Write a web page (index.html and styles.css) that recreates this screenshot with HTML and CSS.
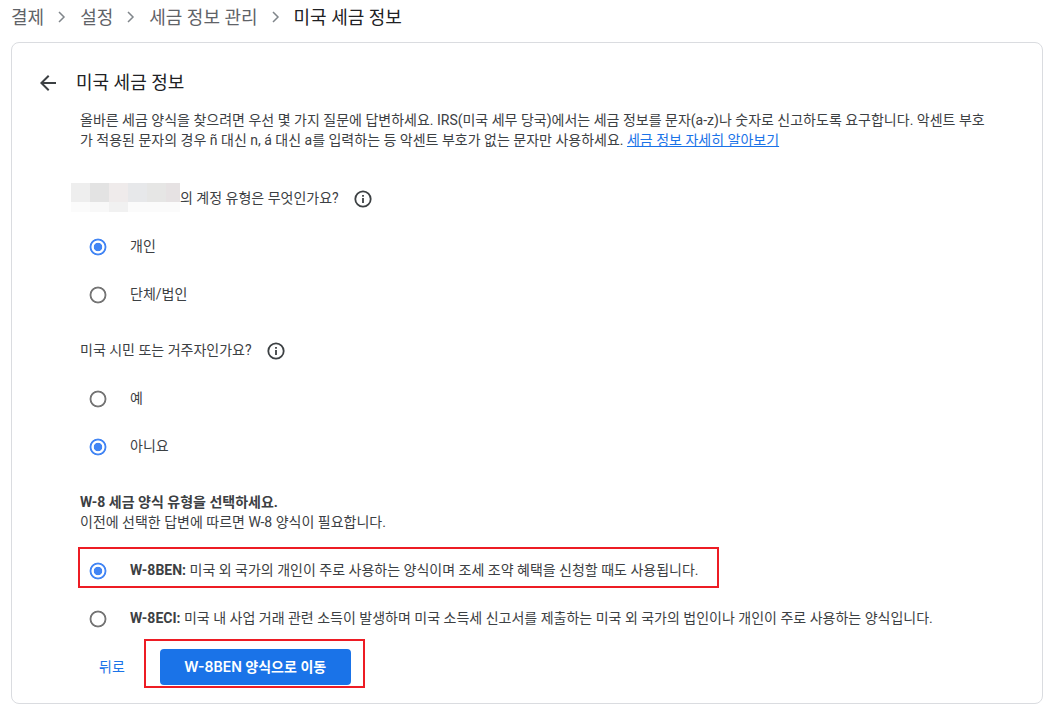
FILE: index.html
```html
<!DOCTYPE html>
<html lang="ko">
<head>
  <meta charset="UTF-8" />
  <meta name="viewport" content="width=device-width, initial-scale=1.0"/>
  <title>미국 세금 정보</title>
  <link rel="stylesheet" href="styles.css">
</head>
<body>
  <nav class="breadcrumb">
    <a href="#">결제</a>
    <svg class="chevron" viewBox="0 0 8 12"><path d="M1 1l5 5-5 5"/></svg>
    <a href="#">설정</a>
    <svg class="chevron" viewBox="0 0 8 12"><path d="M1 1l5 5-5 5"/></svg>
    <a href="#">세금 정보 관리</a>
    <svg class="chevron" viewBox="0 0 8 12"><path d="M1 1l5 5-5 5"/></svg>
    <span class="current">미국 세금 정보</span>
  </nav>

  <main class="card">
    <header class="card-header">
      <button type="button" class="back-arrow" aria-label="뒤로">
        <svg viewBox="0 0 24 24"><path d="M20 11H7.830l5.590-5.590L12 4l-8 8 8 8 1.410-1.410L7.830 13H20z"/></svg>
      </button>
      <h1>미국 세금 정보</h1>
    </header>

    <form class="content">
      <p class="intro">올바른 세금 양식을 찾으려면 우선 몇 가지 질문에 답변하세요. IRS(미국 세무 당국)에서는 세금 정보를 문자(a-z)나 숫자로 신고하도록 요구합니다. 악센트 부호가 적용된 문자의 경우 ñ 대신 n, á 대신 a를 입력하는 등 악센트 부호가 없는 문자만 사용하세요. <a href="#" class="more">세금 정보 자세히 알아보기</a></p>

      <!-- Account type -->
      <section class="group account">
        <div class="question">
          <svg class="masked-name" viewBox="0 0 109 29" shape-rendering="crispEdges">
            <rect width="19" height="19" fill="#eeeeee"/>
            <rect x="19" width="19" height="19" fill="#e3e3e3"/>
            <rect x="38" width="19" height="19" fill="#efebeb"/>
            <rect x="57" width="19" height="19" fill="#e7e8ea"/>
            <rect x="76" width="19" height="19" fill="#e6e6e5"/>
            <rect x="95" width="14" height="19" fill="#e6e2e3"/>
            <rect y="19" width="109" height="10" fill="#fbfbfb"/>
            <rect x="19" y="19" width="19" height="10" fill="#f8f8f8"/>
            <rect x="38" y="19" width="19" height="10" fill="#f1f1f1"/>
          </svg>
          <span>의 계정 유형은 무엇인가요?</span>
          <svg class="info" viewBox="0 0 18 18"><circle cx="9" cy="9" r="7.700"/><path d="M9 8v5M9 5v1.800"/></svg>
        </div>
        <label class="option"><input type="radio" name="account" checked><span>개인</span></label>
        <label class="option"><input type="radio" name="account"><span>단체/법인</span></label>
      </section>

      <!-- Residency -->
      <section class="group">
        <div class="question">
          <span>미국 시민 또는 거주자인가요?</span>
          <svg class="info" viewBox="0 0 18 18"><circle cx="9" cy="9" r="7.700"/><path d="M9 8v5M9 5v1.800"/></svg>
        </div>
        <label class="option"><input type="radio" name="resident"><span>예</span></label>
        <label class="option"><input type="radio" name="resident" checked><span>아니요</span></label>
      </section>

      <!-- Form type -->
      <section class="group">
        <div class="form-type">
          <h2>W-8 세금 양식 유형을 선택하세요.</h2>
          <p>이전에 선택한 답변에 따르면 W-8 양식이 필요합니다.</p>
        </div>
        <label class="option marked"><input type="radio" name="form" checked><span><b>W-8BEN:</b> 미국 외 국가의 개인이 주로 사용하는 양식이며 조세 조약 혜택을 신청할 때도 사용됩니다.</span></label>
        <label class="option"><input type="radio" name="form"><span><b>W-8ECI:</b> 미국 내 사업 거래 관련 소득이 발생하며 미국 소득세 신고서를 제출하는 미국 외 국가의 법인이나 개인이 주로 사용하는 양식입니다.</span></label>
      </section>

      <div class="actions">
        <button type="button" class="text-btn">뒤로</button>
        <div class="marked">
          <button type="submit" class="primary-btn">W-8BEN 양식으로 이동</button>
        </div>
      </div>
    </form>
  </main>
</body>
</html>
```
FILE: styles.css
```css
* { box-sizing: border-box; margin: 0; padding: 0; }

body {
  padding: 4px 14px 24px 11px;
  background: #fff;
  color: #3c4043;
  font-family: Roboto, "Noto Sans CJK KR", sans-serif;
  font-size: 14px;
  line-height: 20px;
}

button {
  border: none;
  background: none;
  font: inherit;
  cursor: pointer;
}

.breadcrumb {
  display: flex;
  align-items: center;
  gap: 14px;
  margin-bottom: 10px;
  font-size: 18px;
  line-height: 28px;
}

.breadcrumb a {
  color: #5f6368;
  text-decoration: none;
}

.breadcrumb .current { color: #202124; }

.chevron {
  width: 8px;
  height: 12px;
  margin-bottom: 2px;
  fill: none;
  stroke: #80868b;
  stroke-width: 1.5;
}

.card {
  padding: 28px 32px 18px 24px;
  border: 1px solid #dadce0;
  border-radius: 8px;
}

.card-header {
  display: flex;
  align-items: center;
  gap: 16px;
  height: 24px;
}

.back-arrow {
  width: 24px;
  height: 24px;
}

.back-arrow svg {
  display: block;
  width: 24px;
  height: 24px;
  fill: #3c4043;
}

h1 {
  color: #202124;
  font-size: 18px;
  font-weight: 400;
  line-height: 24px;
}

.content { padding: 15px 0 0 44px; }

.intro { padding-right: 16px; }

.more { color: #1a73e8; }

.group { margin-top: 20px; }

.account { margin-top: 37px; }

.question {
  display: flex;
  align-items: center;
  height: 24px;
  margin-bottom: 12px;
}

.question span,
.option span {
  padding-bottom: 2px;
}

.masked-name {
  width: 109px;
  height: 29px;
  margin: -3px 0 0 -9px;
}

.info {
  width: 18px;
  height: 18px;
  margin-left: 15px;
  fill: none;
  stroke: #3c4043;
  stroke-width: 1.8;
}

.option {
  display: flex;
  align-items: center;
  gap: 23px;
  min-height: 48px;
  padding-left: 9px;
}

.option input {
  flex: none;
  width: 18px;
  height: 18px;
  appearance: none;
  border-radius: 50%;
  background: radial-gradient(closest-side, transparent 68%, #757575 77%, #757575 89%, transparent 98%);
}

.option input:checked {
  background: radial-gradient(closest-side, #4285f4 43%, transparent 51%, transparent 68%, #4285f4 77%, #4285f4 89%, transparent 98%);
}

.form-type { padding: 1px 0 15px; }

h2 {
  font-size: 14px;
  font-weight: 700;
  line-height: 20px;
}

/* red frames round the choices to make */
.marked {
  position: relative;
  width: fit-content;
}

.marked::after {
  content: "";
  position: absolute;
  inset: 0 -20px 7px -2px;
  border: 2px solid #ed1c24;
  pointer-events: none;
}

.actions {
  display: flex;
  align-items: center;
  gap: 35px;
  margin-top: 6px;
  padding-left: 19px;
}

.actions .marked::after { inset: -10px -14px -3px -16px; }

.text-btn {
  color: #1a73e8;
}

.primary-btn {
  min-width: 191px;
  height: 36px;
  padding: 0 20px;
  border-radius: 4px;
  background: #1a73e8;
  color: #fff;
  font-family: Inter, "Noto Sans CJK KR", sans-serif;
  font-weight: 600;
}

.text-btn,
.primary-btn {
  display: block;
  line-height: 36px;
}
```
